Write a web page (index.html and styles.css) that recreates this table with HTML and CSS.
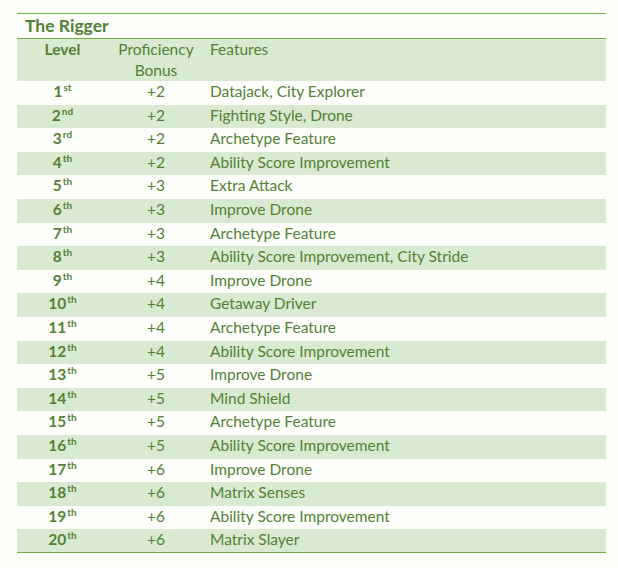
FILE: index.html
```html
<!DOCTYPE html>
<html>
<head>
<meta charset="utf-8">
<link rel="stylesheet" href="styles.css">
</head>
<body>
<div class="wrap">
<table class="tbl">
<colgroup><col class="c1"><col class="c2"><col class="c3"></colgroup>
<thead>
<tr class="title-row"><th colspan="3">The Rigger</th></tr>
<tr class="head-row"><th class="lvl">Level</th><th class="prof">Proficiency Bonus</th><th class="feat">Features</th></tr>
</thead>
<tbody>
<tr><td class="lvl">1<sup>st</sup></td><td class="prof">+2</td><td class="feat">Datajack, City Explorer</td></tr>
<tr><td class="lvl">2<sup>nd</sup></td><td class="prof">+2</td><td class="feat">Fighting Style, Drone</td></tr>
<tr><td class="lvl">3<sup>rd</sup></td><td class="prof">+2</td><td class="feat">Archetype Feature</td></tr>
<tr><td class="lvl">4<sup>th</sup></td><td class="prof">+2</td><td class="feat">Ability Score Improvement</td></tr>
<tr><td class="lvl">5<sup>th</sup></td><td class="prof">+3</td><td class="feat">Extra Attack</td></tr>
<tr><td class="lvl">6<sup>th</sup></td><td class="prof">+3</td><td class="feat">Improve Drone</td></tr>
<tr><td class="lvl">7<sup>th</sup></td><td class="prof">+3</td><td class="feat">Archetype Feature</td></tr>
<tr><td class="lvl">8<sup>th</sup></td><td class="prof">+3</td><td class="feat">Ability Score Improvement, City Stride</td></tr>
<tr><td class="lvl">9<sup>th</sup></td><td class="prof">+4</td><td class="feat">Improve Drone</td></tr>
<tr><td class="lvl">10<sup>th</sup></td><td class="prof">+4</td><td class="feat">Getaway Driver</td></tr>
<tr><td class="lvl">11<sup>th</sup></td><td class="prof">+4</td><td class="feat">Archetype Feature</td></tr>
<tr><td class="lvl">12<sup>th</sup></td><td class="prof">+4</td><td class="feat">Ability Score Improvement</td></tr>
<tr><td class="lvl">13<sup>th</sup></td><td class="prof">+5</td><td class="feat">Improve Drone</td></tr>
<tr><td class="lvl">14<sup>th</sup></td><td class="prof">+5</td><td class="feat">Mind Shield</td></tr>
<tr><td class="lvl">15<sup>th</sup></td><td class="prof">+5</td><td class="feat">Archetype Feature</td></tr>
<tr><td class="lvl">16<sup>th</sup></td><td class="prof">+5</td><td class="feat">Ability Score Improvement</td></tr>
<tr><td class="lvl">17<sup>th</sup></td><td class="prof">+6</td><td class="feat">Improve Drone</td></tr>
<tr><td class="lvl">18<sup>th</sup></td><td class="prof">+6</td><td class="feat">Matrix Senses</td></tr>
<tr><td class="lvl">19<sup>th</sup></td><td class="prof">+6</td><td class="feat">Ability Score Improvement</td></tr>
<tr><td class="lvl">20<sup>th</sup></td><td class="prof">+6</td><td class="feat">Matrix Slayer</td></tr>
</tbody>
</table>
</div>
</body>
</html>
```
FILE: styles.css
```css
html, body {
  margin: 0;
  padding: 0;
  background: #fefefb;
}
body {
  font-family: Lato, "Open Sans", sans-serif;
  font-size: 15.5px;
  color: #538135;
}
.wrap {
  padding: 13px 0 0 17px;
}
.tbl {
  width: 589px;
  border-collapse: collapse;
  table-layout: fixed;
  border-top: 1px solid #70ad47;
  border-bottom: 1px solid #70ad47;
}
.c1 { width: 91px; }
.c2 { width: 96px; }
.tbl th, .tbl td {
  padding: 0;
  vertical-align: top;
  line-height: 20px;
}
.title-row th {
  height: 24px;
  text-align: left;
  padding-left: 8px;
  font-size: 17.5px;
  font-weight: bold;
  line-height: 24px;
  border-bottom: 1px solid #70ad47;
}
.head-row th {
  background: #dae9d1;
  font-weight: normal;
  height: 42px;
  line-height: 21px;
}
.lvl {
  text-align: center;
  font-weight: bold;
}
.head-row th.lvl { font-weight: bold; }
.prof {
  text-align: center;
  padding: 0 10px !important;
}
.feat {
  text-align: left;
  padding-left: 6px !important;
}
.tbl tbody td {
  height: 23.6px;
  box-sizing: border-box;
}
.tbl tbody tr:nth-child(even) td {
  background: #dae9d1;
}
sup {
  font-size: 10px;
  line-height: 0;
  vertical-align: 6px;
  margin-left: 1px;
}
```
